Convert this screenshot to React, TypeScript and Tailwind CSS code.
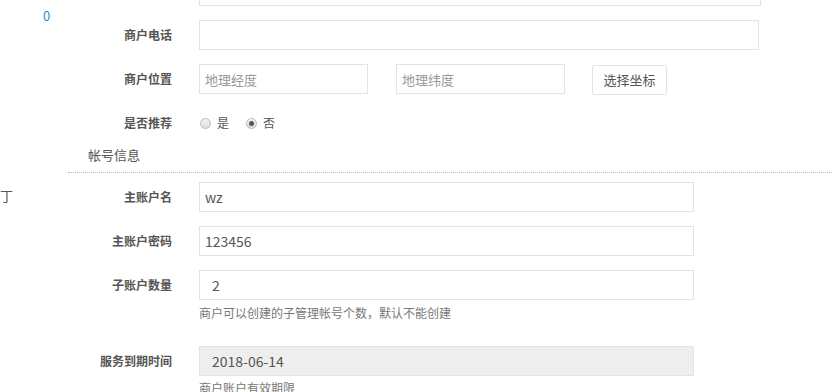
import React from 'react';

const font = { fontFamily: '"Noto Sans CJK SC", "Liberation Sans", sans-serif' };

const Label: React.FC<{ text: string }> = ({ text }) => (
  <div className="w-[119px] shrink-0 pr-[15px] text-right text-[12px] font-bold leading-[30px] text-[#555]">
    {text}
  </div>
);

const Row: React.FC<{ label: string; children: React.ReactNode; className?: string }> = ({
  label,
  children,
  className = '',
}) => (
  <div className={`flex items-start ${className}`}>
    <Label text={label} />
    <div className="pl-[12px]">{children}</div>
  </div>
);

const Input: React.FC<{
  value?: string;
  placeholder?: string;
  width: string;
  indent?: string;
  disabled?: boolean;
}> = ({ value, placeholder, width, indent = 'px-[5px]', disabled }) => (
  <div
    className={`${width} h-[30px] border border-[#e3e3e3] ${indent} text-[14px] leading-[28px] ${
      disabled ? 'bg-[#eeeeee]' : 'bg-white'
    }`}
  >
    {value ? (
      <span className="text-[#555]">{value}</span>
    ) : placeholder ? (
      <span className="text-[13px] text-[#999]">{placeholder}</span>
    ) : null}
  </div>
);

export default function App() {
  return (
    <div className="relative h-[392px] w-[832px] overflow-hidden bg-white" style={font}>
      <div className="flex">
        {/* sidebar remnants */}
        <div className="w-[68px] shrink-0">
          <div className="pl-[43px] pt-[8px] text-[13px] leading-[16px] text-[#3c8dbc]">0</div>
          <div className="mt-[164px] text-[13px] leading-[16px] text-[#555]">丁</div>
        </div>

        <div className="flex-1">
          <div className="mt-[-24px] flex flex-col gap-[14px]">
            <Row label="">
              <Input width="w-[562px]" />
            </Row>
            <Row label="商户电话">
              <Input width="w-[560px]" />
            </Row>
            <Row label="商户位置">
              <div className="flex items-start">
                <Input width="w-[169px]" placeholder="地理经度" />
                <div className="ml-[28px]">
                  <Input width="w-[169px]" placeholder="地理纬度" />
                </div>
                <button className="ml-[27px] mt-[1px] h-[30px] w-[75px] rounded-[2px] border border-[#e3e3e3] bg-white text-[13px] text-[#555]">
                  选择坐标
                </button>
              </div>
            </Row>
            <Row label="是否推荐" className="mt-[-1px]">
              <div className="flex h-[30px] items-center text-[12px] text-[#555]">
                <span className="ml-[1px] inline-block h-[11px] w-[11px] rounded-full border border-[#bbb] bg-gradient-to-b from-[#f4f4f4] to-[#dcdcdc]" />
                <span className="ml-[6px]">是</span>
                <span className="ml-[17px] flex h-[11px] w-[11px] items-center justify-center rounded-full border border-[#bbb] bg-gradient-to-b from-[#f4f4f4] to-[#dcdcdc]">
                  <span className="h-[5px] w-[5px] rounded-full bg-[#555]" />
                </span>
                <span className="ml-[6px]">否</span>
              </div>
            </Row>
          </div>

          <div className="ml-[20px] mt-[8px] text-[13px] leading-[18px] text-[#555]">帐号信息</div>
          <div className="mt-[8px] border-t border-dotted border-[#bbb]" />

          <div className="mt-[9px] flex flex-col gap-[14px]">
            <Row label="主账户名">
              <Input width="w-[495px]" value="wz" />
            </Row>
            <Row label="主账户密码">
              <Input width="w-[495px]" value="123456" />
            </Row>
            <Row label="子账户数量">
              <Input width="w-[495px]" value="2" indent="px-[12px]" />
              <div className="mt-[4px] text-[12px] leading-[18px] text-[#777]">
                商户可以创建的子管理帐号个数，默认不能创建
              </div>
            </Row>
            <Row label="服务到期时间" className="mt-[10px]">
              <Input width="w-[495px]" value="2018-06-14" indent="px-[12px]" disabled />
              <div className="mt-[3px] text-[12px] leading-[18px] text-[#777]">商户账户有效期限</div>
            </Row>
          </div>
        </div>
      </div>
    </div>
  );
}
